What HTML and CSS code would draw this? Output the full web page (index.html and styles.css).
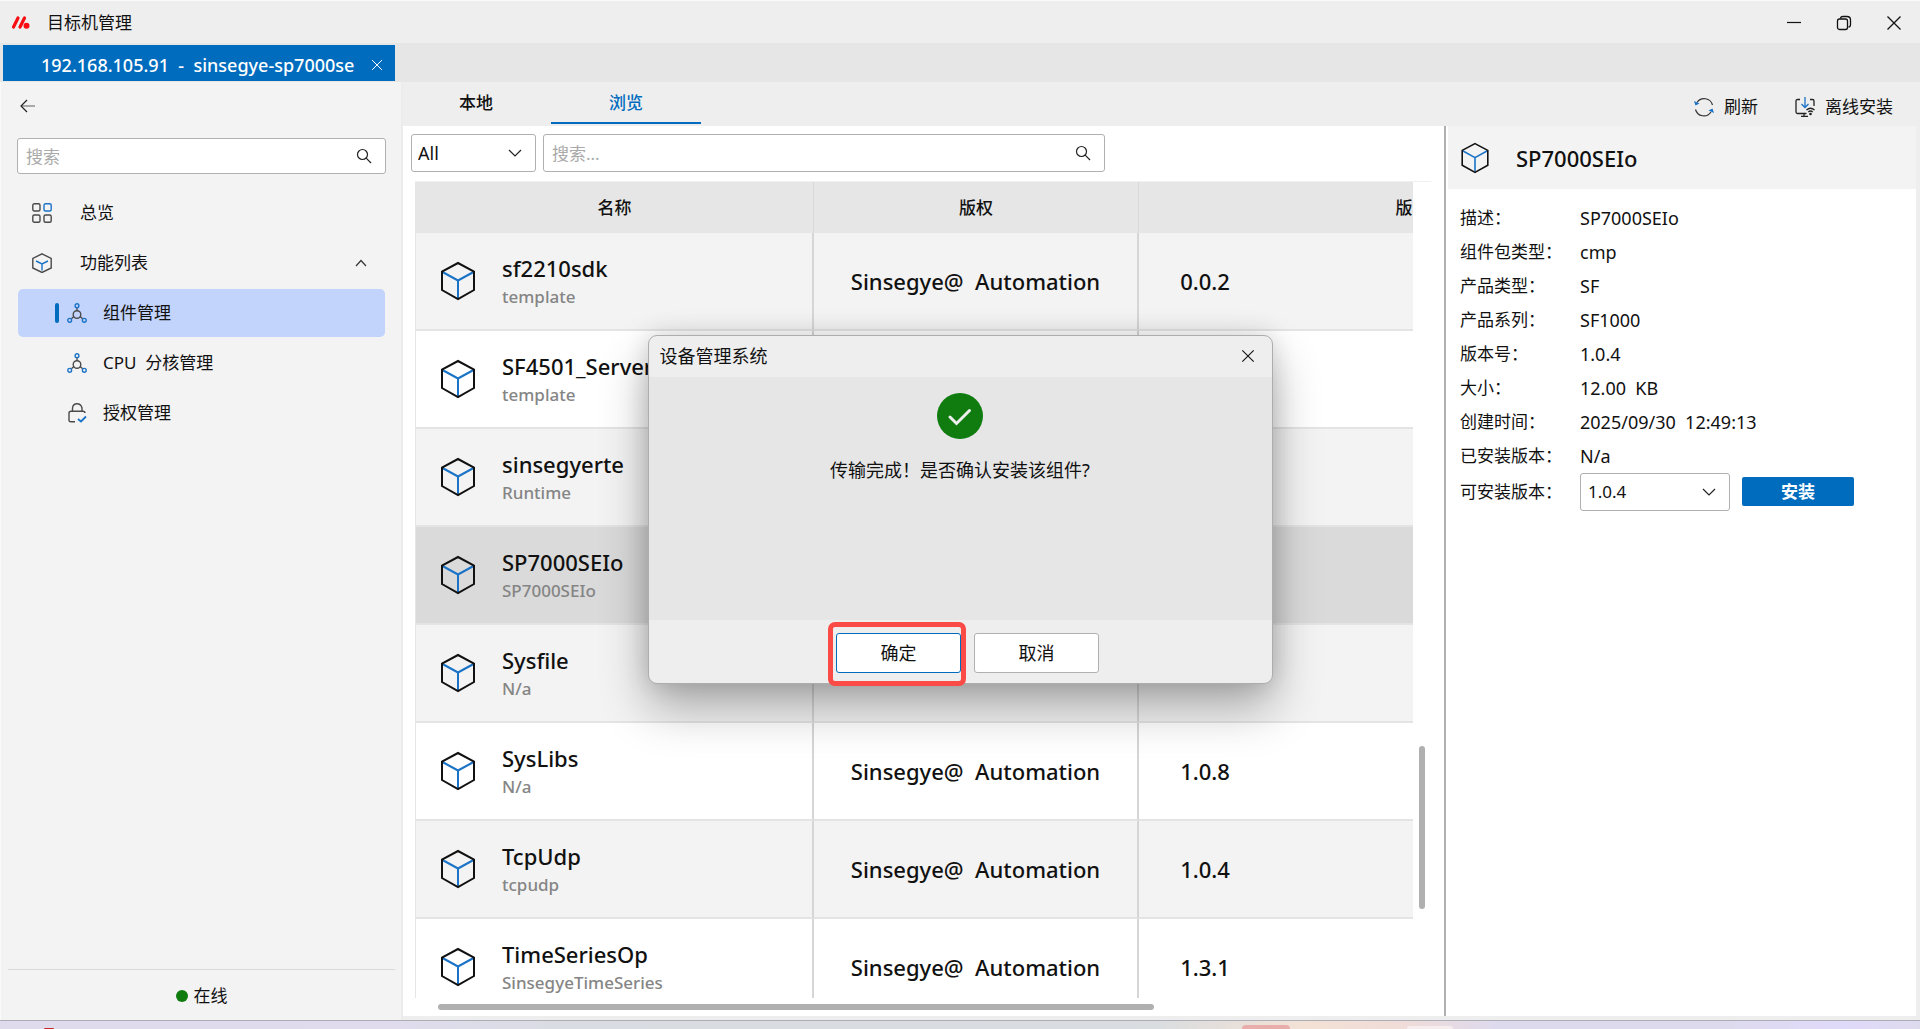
FILE: index.html
```html
<!DOCTYPE html>
<html lang="zh-CN">
<head>
<meta charset="utf-8">
<meta name="viewport" content="width=device-width, initial-scale=1">
<title>目标机管理</title>
<link rel="stylesheet" href="styles.css">
</head>
<body>
<svg class="sprite" aria-hidden="true">
  <symbol id="i-cube" viewBox="0 0 36 40">
    <path d="M2.5 11 18 19.500 33.500 11M18 19.500V37" fill="none" stroke="#1a73c7" stroke-width="2"/>
    <path d="M18 2 34 10.500V29L18 38 2 29V10.500Z" fill="none" stroke="#111" stroke-width="2"/>
  </symbol>
  <symbol id="i-search" viewBox="0 0 16 16">
    <circle cx="6.500" cy="6.500" r="5" fill="none" stroke="#222" stroke-width="1.2"/>
    <path d="M10.200 10.200 15 15" stroke="#222" stroke-width="1.200"/>
  </symbol>
  <symbol id="i-down" viewBox="0 0 14 8"><path d="M1 1 7 7 13 1" fill="none" stroke="#222" stroke-width="1.200"/></symbol>
  <symbol id="i-close" viewBox="0 0 16 16"><path d="M1.500 1.500 14.500 14.500M14.500 1.500 1.500 14.500" fill="none" stroke="currentColor" stroke-width="1.300"/></symbol>
  <symbol id="i-node" viewBox="0 0 20 20">
    <g fill="none" stroke="#4a4a4a" stroke-width="1.400"><path d="M10 5V7.500M6.800 13.500 4.400 15.800M13.200 13.500 15.600 15.800"/><circle cx="10" cy="11.500" r="3.800"/></g>
    <g fill="none" stroke="#1a73c7" stroke-width="1.400"><circle cx="10" cy="2.700" r="1.900"/><circle cx="2.700" cy="17.300" r="1.900"/><circle cx="17.300" cy="17.300" r="1.900"/></g>
  </symbol>
</svg>

<div class="app">
  <header class="titlebar">
    <svg class="logo" viewBox="0 0 20 16" aria-hidden="true"><path d="M2.500 12 7 3M9 12 13.500 3" stroke="#f80d12" stroke-width="3.200" stroke-linecap="round"/><circle cx="15.500" cy="10.800" r="3" fill="#f80d12"/></svg>
    <h1 class="app-name">目标机管理</h1>
    <div class="window-controls">
      <button class="plain" aria-label="最小化"><svg width="16" height="16" viewBox="0 0 16 16"><path d="M1 7.500H15" stroke="#111" stroke-width="1.200"/></svg></button>
      <button class="plain" aria-label="还原"><svg width="16" height="16" viewBox="0 0 16 16" fill="none" stroke="#111" stroke-width="1.300"><rect x="1.500" y="4" width="10" height="10.500" rx="2"/><path d="M4.500 3.500Q4.500 1.500 7 1.500H11Q14.500 1.500 14.500 5V9.500Q14.500 12 12.500 12"/></svg></button>
      <button class="plain" aria-label="关闭"><svg width="16" height="16"><use href="#i-close"/></svg></button>
    </div>
  </header>

  <nav class="device-tabs">
    <div class="device-tab">
      <a href="#device" class="device-link">192.168.105.91  -  sinsegye-sp7000se</a>
      <button class="plain tab-close" aria-label="关闭标签"><svg width="12" height="12"><use href="#i-close"/></svg></button>
    </div>
  </nav>

  <div class="workspace">
    <aside class="sidebar">
      <button class="plain back" aria-label="返回"><svg width="16" height="14" viewBox="0 0 16 14" fill="none"><path d="M1 7H15" stroke="#777" stroke-width="1.200"/><path d="M7 1 1 7 7 13" stroke="#222" stroke-width="1.200"/></svg></button>
      <label class="field side-search"><input type="text" placeholder="搜索" aria-label="搜索"><svg width="16" height="16"><use href="#i-search"/></svg></label>
      <nav class="menu">
        <a class="item" href="#overview"><svg width="20" height="20" viewBox="0 0 20 20" fill="none" stroke="#4a4a4a" stroke-width="1.400"><rect x=".8" y=".8" width="7.200" height="7.200" rx="1.500"/><rect x="12" y=".8" width="7.200" height="7.200" rx="1.500" stroke="#1a73c7"/><rect x=".8" y="12" width="7.200" height="7.200" rx="1.500"/><rect x="12" y="12" width="7.200" height="7.200" rx="1.500"/></svg><span>总览</span></a>
        <a class="item" href="#features"><svg width="20" height="20" viewBox="0 0 20 20" fill="none" stroke-width="1.400"><path d="M10 .8 19.200 5.500V15L10 19.500.8 15V5.500Z" stroke="#4a4a4a"/><path d="M4 8 10 11 16 8M10 11V17.500" stroke="#1a73c7"/></svg><span>功能列表</span><svg class="caret" width="12" height="8" viewBox="0 0 12 8"><path d="M1 7 6 1.500 11 7" fill="none" stroke="#333" stroke-width="1.200"/></svg></a>
        <a class="item sub active" href="#components"><svg width="20" height="20"><use href="#i-node"/></svg><span>组件管理</span></a>
        <a class="item sub" href="#cpu"><svg width="20" height="20"><use href="#i-node"/></svg><span>CPU  分核管理</span></a>
        <a class="item sub" href="#license"><svg width="20" height="20" viewBox="0 0 20 20" fill="none" stroke-width="1.400"><path d="M8 18.800H4Q2 18.800 2 17V10Q2 8.200 4 8.200H16Q18 8.200 18 10M5.500 8V5Q6 .8 10 .8T15 5V8" stroke="#4a4a4a"/><path d="M11 16 14 18.500 19 13.500" stroke="#1a73c7" stroke-width="1.800"/></svg><span>授权管理</span></a>
      </nav>
      <footer class="status"><i class="dot"></i><span>在线</span></footer>
    </aside>

    <main class="content">
      <div class="toolbar">
        <nav class="views">
          <a class="view" href="#local">本地</a>
          <a class="view current" href="#browse">浏览</a>
        </nav>
        <div class="actions">
          <button class="plain action"><svg width="20" height="20" viewBox="0 0 20 20" fill="none"><path d="M3 5.500A8.600 8.600 0 0 1 18.500 8M1.500 12.500A8.600 8.600 0 0 0 17 15" stroke="#333" stroke-width="1.200"/><path d="M0 4 1.500 8.500 5.500 6.500ZM20 16 18.500 11.500 14.500 13.500Z" fill="#1a73c7"/></svg>刷新</button>
          <button class="plain action"><svg width="20" height="20" viewBox="0 0 20 20" fill="none" stroke="#222" stroke-width="1.300"><path d="M5 2.500H2.500Q1 2.500 1 4V15Q1 16.500 2.500 16.500H11.500M15 2.500H17.500Q19 2.500 19 4V9M9 16.500V19M6 19.300H13"/><path d="M10 0V10M6.500 7 10 10.500 13.500 7" stroke="#1a73c7"/><path d="M11.500 13Q15.500 9.500 19.500 13M13.300 15Q15.500 13 17.700 15"/><circle cx="15.500" cy="17" r=".7"/></svg>离线安装</button>
        </div>
      </div>

      <div class="panes">
        <section class="list-pane">
          <div class="filters">
            <label class="field type-select"><select aria-label="类型"><option>All</option></select><svg width="14" height="8"><use href="#i-down"/></svg></label>
            <label class="field list-search"><input type="text" placeholder="搜索..." aria-label="搜索组件"><svg width="16" height="16"><use href="#i-search"/></svg></label>
          </div>
          <div class="grid-area">
            <div class="table-view">
              <table class="components">
                <colgroup><col class="c-name"><col class="c-owner"><col class="c-version"></colgroup>
                <thead><tr><th>名称</th><th>版权</th><th>版本</th></tr></thead>
                <tbody>
                  <tr class="alt"><td><div class="pkg"><svg class="cube"><use href="#i-cube"/></svg><div><div class="name">sf2210sdk</div><div class="kind">template</div></div></div></td><td>Sinsegye@  Automation</td><td><div class="ver">0.0.2</div></td></tr>
                  <tr><td><div class="pkg"><svg class="cube"><use href="#i-cube"/></svg><div><div class="name">SF4501_Server</div><div class="kind">template</div></div></div></td><td></td><td></td></tr>
                  <tr class="alt"><td><div class="pkg"><svg class="cube"><use href="#i-cube"/></svg><div><div class="name">sinsegyerte</div><div class="kind">Runtime</div></div></div></td><td></td><td></td></tr>
                  <tr class="selected"><td><div class="pkg"><svg class="cube"><use href="#i-cube"/></svg><div><div class="name">SP7000SEIo</div><div class="kind">SP7000SEIo</div></div></div></td><td></td><td></td></tr>
                  <tr class="alt"><td><div class="pkg"><svg class="cube"><use href="#i-cube"/></svg><div><div class="name">Sysfile</div><div class="kind">N/a</div></div></div></td><td></td><td></td></tr>
                  <tr><td><div class="pkg"><svg class="cube"><use href="#i-cube"/></svg><div><div class="name">SysLibs</div><div class="kind">N/a</div></div></div></td><td>Sinsegye@  Automation</td><td><div class="ver">1.0.8</div></td></tr>
                  <tr class="alt"><td><div class="pkg"><svg class="cube"><use href="#i-cube"/></svg><div><div class="name">TcpUdp</div><div class="kind">tcpudp</div></div></div></td><td>Sinsegye@  Automation</td><td><div class="ver">1.0.4</div></td></tr>
                  <tr><td><div class="pkg"><svg class="cube"><use href="#i-cube"/></svg><div><div class="name">TimeSeriesOp</div><div class="kind">SinsegyeTimeSeries</div></div></div></td><td>Sinsegye@  Automation</td><td><div class="ver">1.3.1</div></td></tr>
                </tbody>
              </table>
            </div>
            <div class="vtrack"><div class="vthumb"></div></div>
            <div class="htrack"><div class="hthumb"></div></div>
          </div>
        </section>

        <aside class="detail">
          <header class="detail-head"><svg class="cube-small"><use href="#i-cube"/></svg><h2>SP7000SEIo</h2></header>
          <dl class="facts">
            <dt>描述：</dt><dd>SP7000SEIo</dd>
            <dt>组件包类型：</dt><dd>cmp</dd>
            <dt>产品类型：</dt><dd>SF</dd>
            <dt>产品系列：</dt><dd>SF1000</dd>
            <dt>版本号：</dt><dd>1.0.4</dd>
            <dt>大小：</dt><dd>12.00  KB</dd>
            <dt>创建时间：</dt><dd>2025/09/30  12:49:13</dd>
            <dt>已安装版本：</dt><dd>N/a</dd>
          </dl>
          <div class="install-row">
            <label for="version">可安装版本：</label>
            <div class="field version-select"><select id="version"><option>1.0.4</option></select><svg width="14" height="8"><use href="#i-down"/></svg></div>
            <button class="install">安装</button>
          </div>
        </aside>
      </div>
    </main>
  </div>
  <div class="desktop-edge"><i class="peek red"></i><i class="peek pink"></i><i class="peek white"></i></div>
</div>

<div class="overlay">
  <div class="dialog" role="dialog" aria-labelledby="dlg-title">
    <header class="dialog-head"><h2 id="dlg-title">设备管理系统</h2><button class="plain" aria-label="关闭对话框"><svg width="14" height="14"><use href="#i-close"/></svg></button></header>
    <div class="dialog-body">
      <svg width="46" height="46" viewBox="0 0 46 46"><circle cx="23" cy="23" r="23" fill="#107c10"/><path d="M13 24 19.500 30.500 32.500 17.500" fill="none" stroke="#eee" stroke-width="3" stroke-linecap="round"/></svg>
      <p>传输完成！是否确认安装该组件?</p>
    </div>
    <footer class="dialog-foot">
      <div class="marked"><button class="btn primary">确定</button></div>
      <button class="btn">取消</button>
    </footer>
  </div>
</div>
</body>
</html>
```
FILE: styles.css
```css
* { box-sizing: border-box; }

body {
  margin: 0;
  color: #111;
  font: 17px/24px "Noto Sans", "Noto Sans CJK SC", sans-serif;
}

h1, h2, p, dl, dd { margin: 0; font-weight: 400; }

a { color: inherit; text-decoration: none; }

button, input, select { font: inherit; color: inherit; }

svg { display: block; flex: none; }

.sprite { position: absolute; width: 0; height: 0; }

.plain { padding: 0; border: 0; background: none; }

.app {
  display: flex;
  flex-direction: column;
  height: 100vh;
  min-height: 640px;
  overflow: hidden;
  background: #eee;
}

/* Title bar */
.titlebar {
  display: flex;
  align-items: center;
  height: 43px;
  padding: 2px 18px 0 11px;
  border-top: 1px solid #fafafa;
  background: #eee;
}

.logo { width: 20px; height: 16px; }

.app-name { margin-left: 16px; font-size: 17px; }

.window-controls { display: flex; gap: 34px; margin-left: auto; }

/* Connected devices */
.device-tabs {
  height: 39px;
  padding: 2px 3px 1px;
  background: #e6e6e6;
}

.device-tab {
  display: flex;
  align-items: center;
  justify-content: space-between;
  width: 392px;
  height: 36px;
  padding: 3px 12px 0 38px;
  background: #006cbe;
  color: #fff;
}

.device-link { font-size: 18px; font-weight: 500; white-space: pre; }

/* Sidebar */
.workspace { display: flex; flex: 1; min-height: 0; }

.sidebar {
  display: flex;
  flex-direction: column;
  flex: none;
  width: 403px;
  padding: 17px 16px 0 17px;
  border-right: 2px solid #ececec;
  border-left: 1px solid #fafafa;
  background: #f3f3f3;
}

.back { align-self: flex-start; padding: 0 2px; }

.field {
  display: grid;
  grid-template-columns: minmax(0, 1fr) auto;
  align-items: center;
  border: 1px solid #b0b0b0;
  border-radius: 3px;
  background: #fff;
}

.field > input, .field > select {
  grid-area: 1 / 1 / 2 / 3;
  width: 100%;
  height: 100%;
  padding: 0 8px;
  border: 0;
  outline: 0;
  background: none;
  appearance: none;
}

.field > svg { grid-area: 1 / 2; margin-right: 13px; pointer-events: none; }

.field > input::placeholder { color: #aaa; opacity: 1; }

.side-search { height: 36px; margin: 25px -1px 0 -1px; }

.menu { margin-top: 15px; }

.item {
  display: flex;
  align-items: center;
  height: 48px;
  margin-bottom: 2px;
  padding-left: 14px;
  border-radius: 5px;
  white-space: pre;
}

.item > svg + span { margin-left: 28px; }

.item .caret { margin: 0 18px 0 auto; }

.sub { padding-left: 49px; }

.sub > svg + span { margin-left: 16px; }

.active { padding-left: 37px; background: #c3d4fc; }

.active::before {
  width: 4px;
  height: 20px;
  margin-right: 8px;
  border-radius: 2px;
  background: #006cbe;
  content: "";
}

.status {
  display: flex;
  align-items: center;
  justify-content: center;
  gap: 6px;
  height: 51px;
  margin: auto -10px 0;
  padding-top: 2px;
  border-top: 1px solid #d9d9d9;
}

.dot { width: 12px; height: 12px; border-radius: 50%; background: #107c10; }

/* Main area */
.content { display: flex; flex: 1; flex-direction: column; min-width: 0; padding: 0 4px 4px 0; }

.toolbar { display: flex; justify-content: space-between; height: 44px; }

.views { display: flex; margin-left: -2px; }

.view {
  width: 150px;
  height: 42px;
  padding-top: 9px;
  border-bottom: 2px solid transparent;
  text-align: center;
  font-weight: 500;
}

.current { border-color: #006cbe; color: #006cbe; }

.actions { display: flex; gap: 37px; padding: 6px 23px 0 0; }

.action { display: flex; align-items: center; gap: 10px; }

.panes { display: flex; flex: 1; min-height: 0; background: #fff; }

.list-pane { display: flex; flex: 1; flex-direction: column; min-width: 0; }

.filters { display: flex; gap: 7px; padding: 8px 8px 9px; }

.type-select { width: 125px; height: 38px; }

.type-select select { padding: 0 6px; font-size: 18px; }

.list-search { width: 562px; height: 38px; }

.grid-area {
  display: grid;
  flex: 1;
  grid-template: minmax(0, 1fr) 18px / minmax(0, 1fr) 18px;
  min-height: 0;
  margin: 0 13px 0 12px;
  border-top: 1px solid #f0f0f0;
}

.table-view { overflow: hidden; border-left: 1px solid #e6e6e6; }

.components { width: 1271px; border-spacing: 0; table-layout: fixed; }

.c-name { width: 398px; }

.c-owner { width: 325px; }

.components th {
  height: 51px;
  padding: 0;
  border-right: 1px solid #d9d9d9;
  background: #e6e6e6;
  font-weight: 500;
}

.components td {
  height: 98px;
  padding: 0;
  border-right: 2px solid #d6d6d6;
  border-bottom: 2px solid #e4e4e4;
  font-size: 22px;
  font-weight: 500;
  line-height: 28px;
  text-align: center;
  white-space: pre;
}

.alt { background: #f3f3f3; }

.selected { background: #dadada; }

.pkg { display: flex; align-items: center; gap: 26px; padding-left: 24px; text-align: left; }

.cube { width: 36px; height: 40px; }

.name { padding-top: 2px; line-height: 30px; }

.kind { color: #858585; font-size: 17px; }

.ver { width: 132px; }

.vtrack { padding: 564px 0 0 6px; overflow: hidden; }

.vthumb { width: 6px; height: 163px; border-radius: 3px; background: #b0b0b0; }

.htrack { padding: 6px 0 0 23px; }

.hthumb { width: 716px; height: 6px; border-radius: 3px; background: #b0b0b0; }

/* Package details */
.detail { flex: none; width: 472px; border-left: 2px solid #b0b0b0; }

.detail-head {
  display: flex;
  align-items: center;
  gap: 26px;
  height: 63px;
  margin-left: 2px;
  padding: 1px 12px 0;
  background: #f3f3f3;
}

.detail-head h2 { font-size: 22px; font-weight: 500; line-height: 30px; }

.cube-small { width: 30px; height: 32px; }

.facts {
  display: grid;
  grid-template-columns: 120px 1fr;
  grid-auto-rows: 34px;
  padding: 12px 0 0 14px;
  line-height: 34px;
  white-space: pre;
}

.facts dd { font-size: 18px; }

.install-row { display: grid; grid-template-columns: 120px 150px 124px; align-items: center; padding-left: 14px; }

.version-select { height: 38px; }

.version-select select { padding: 0 7px; }

.install {
  height: 29px;
  margin: 0 0 1px 12px;
  padding: 0;
  border: 0;
  border-radius: 2px;
  background: #006cbe;
  color: #fff;
  font-weight: 700;
  line-height: 28px;
}

/* Strip of desktop under the window */
.desktop-edge {
  display: flex;
  flex: none;
  height: 9px;
  align-items: flex-end;
  overflow: hidden;
  border-top: 1px solid #adadb5;
  background: linear-gradient(90deg, #dfdbec 0%, #e0dcee 20%, #d9dce2 30%, #d9dde0 60%, #f3e1d5 68%, #f0dcd8 73%, #dedaee 78%, #dedaee 90%, #e0dafa 96%, #dedaee 100%);
}

.peek { flex: none; height: 4px; border-radius: 4px 4px 0 0; }

.red { width: 10px; height: 1px; margin-left: 44px; background: #c82828; }

.pink { width: 48px; margin-left: 1188px; background: #e9aeab; }

.white { width: 46px; height: 3px; margin-left: 117px; background: #f6eeee; }

/* Confirmation dialog */
.overlay {
  position: absolute;
  inset: 0;
  display: flex;
  align-items: center;
  justify-content: center;
  padding-bottom: 10px;
}

.dialog {
  width: 625px;
  border: 1px solid #adadad;
  border-radius: 9px;
  background: #eee;
  box-shadow: 0 24px 48px rgba(0, 0, 0, .3), 0 0 24px rgba(0, 0, 0, .14);
  font-size: 18px;
}

.dialog-head {
  display: flex;
  align-items: center;
  justify-content: space-between;
  height: 41px;
  padding: 0 17px 2px 11px;
}

.dialog-head h2 { font-size: 18px; }

.dialog-body {
  display: flex;
  flex-direction: column;
  align-items: center;
  gap: 19px;
  height: 243px;
  padding-top: 16px;
  background: #e6e6e6;
}

.dialog-foot { display: flex; justify-content: center; gap: 8px; padding: 2px 0 0 16px; }

.marked {
  margin: 0 0 -3px -9px;
  padding: 6px 0 8px 3px;
  border: 5px solid #fa4b46;
  border-radius: 7px;
}

.btn {
  width: 125px;
  height: 40px;
  margin-top: 11px;
  padding: 0;
  border: 1px solid #b0b0b0;
  border-radius: 3px;
  background: #fff;
}

.primary { display: block; margin-top: 0; border-color: #006cbe; }
```
